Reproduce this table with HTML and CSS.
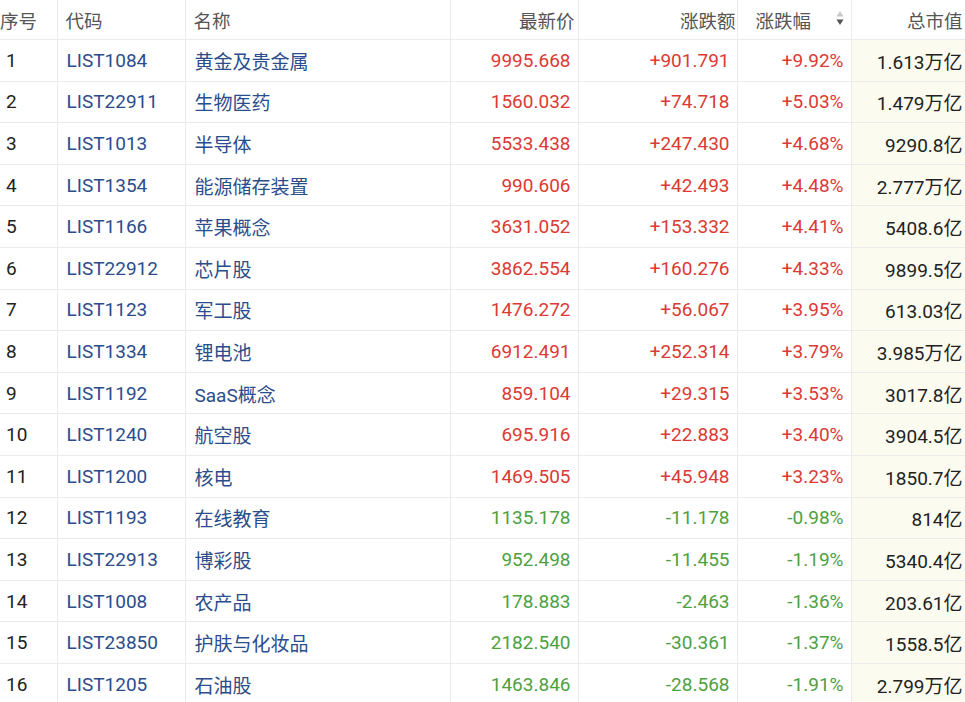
FILE: index.html
```html
<!DOCTYPE html>
<html lang="zh">
<head>
<meta charset="utf-8">
<title>板块行情</title>
<link rel="stylesheet" href="styles.css">
</head>
<body>
<table class="quotes">
  <colgroup>
    <col class="c-idx"><col class="c-code"><col class="c-name"><col class="c-price"><col class="c-chg"><col class="c-pct"><col class="c-cap">
  </colgroup>
  <thead>
    <tr>
      <th class="h-idx">序号</th>
      <th class="left">代码</th>
      <th class="left">名称</th>
      <th class="right">最新价</th>
      <th class="right h-chg">涨跌额</th>
      <th class="left sort-th"><span class="sort-label">涨跌幅</span><span class="sort-icon"><svg width="10" height="18" viewBox="0 0 10 18"><path d="M1.5 7.5 L5 2 L8.5 7.5 Z" fill="#c8c8c8"/><path d="M1.5 10.5 L5 16 L8.5 10.5 Z" fill="#555"/></svg></span></th>
      <th class="right">总市值</th>
    </tr>
  </thead>
  <tbody>
    <tr><td class="idx">1</td><td class="code">LIST1084</td><td class="name">黄金及贵金属</td><td class="num up">9995.668</td><td class="num up">+901.791</td><td class="num up">+9.92%</td><td class="cap">1.613万亿</td></tr>
    <tr><td class="idx">2</td><td class="code">LIST22911</td><td class="name">生物医药</td><td class="num up">1560.032</td><td class="num up">+74.718</td><td class="num up">+5.03%</td><td class="cap">1.479万亿</td></tr>
    <tr><td class="idx">3</td><td class="code">LIST1013</td><td class="name">半导体</td><td class="num up">5533.438</td><td class="num up">+247.430</td><td class="num up">+4.68%</td><td class="cap">9290.8亿</td></tr>
    <tr><td class="idx">4</td><td class="code">LIST1354</td><td class="name">能源储存装置</td><td class="num up">990.606</td><td class="num up">+42.493</td><td class="num up">+4.48%</td><td class="cap">2.777万亿</td></tr>
    <tr><td class="idx">5</td><td class="code">LIST1166</td><td class="name">苹果概念</td><td class="num up">3631.052</td><td class="num up">+153.332</td><td class="num up">+4.41%</td><td class="cap">5408.6亿</td></tr>
    <tr><td class="idx">6</td><td class="code">LIST22912</td><td class="name">芯片股</td><td class="num up">3862.554</td><td class="num up">+160.276</td><td class="num up">+4.33%</td><td class="cap">9899.5亿</td></tr>
    <tr><td class="idx">7</td><td class="code">LIST1123</td><td class="name">军工股</td><td class="num up">1476.272</td><td class="num up">+56.067</td><td class="num up">+3.95%</td><td class="cap">613.03亿</td></tr>
    <tr><td class="idx">8</td><td class="code">LIST1334</td><td class="name">锂电池</td><td class="num up">6912.491</td><td class="num up">+252.314</td><td class="num up">+3.79%</td><td class="cap">3.985万亿</td></tr>
    <tr><td class="idx">9</td><td class="code">LIST1192</td><td class="name">SaaS概念</td><td class="num up">859.104</td><td class="num up">+29.315</td><td class="num up">+3.53%</td><td class="cap">3017.8亿</td></tr>
    <tr><td class="idx">10</td><td class="code">LIST1240</td><td class="name">航空股</td><td class="num up">695.916</td><td class="num up">+22.883</td><td class="num up">+3.40%</td><td class="cap">3904.5亿</td></tr>
    <tr><td class="idx">11</td><td class="code">LIST1200</td><td class="name">核电</td><td class="num up">1469.505</td><td class="num up">+45.948</td><td class="num up">+3.23%</td><td class="cap">1850.7亿</td></tr>
    <tr><td class="idx">12</td><td class="code">LIST1193</td><td class="name">在线教育</td><td class="num down">1135.178</td><td class="num down">-11.178</td><td class="num down">-0.98%</td><td class="cap">814亿</td></tr>
    <tr><td class="idx">13</td><td class="code">LIST22913</td><td class="name">博彩股</td><td class="num down">952.498</td><td class="num down">-11.455</td><td class="num down">-1.19%</td><td class="cap">5340.4亿</td></tr>
    <tr><td class="idx">14</td><td class="code">LIST1008</td><td class="name">农产品</td><td class="num down">178.883</td><td class="num down">-2.463</td><td class="num down">-1.36%</td><td class="cap">203.61亿</td></tr>
    <tr><td class="idx">15</td><td class="code">LIST23850</td><td class="name">护肤与化妆品</td><td class="num down">2182.540</td><td class="num down">-30.361</td><td class="num down">-1.37%</td><td class="cap">1558.5亿</td></tr>
    <tr><td class="idx">16</td><td class="code">LIST1205</td><td class="name">石油股</td><td class="num down">1463.846</td><td class="num down">-28.568</td><td class="num down">-1.91%</td><td class="cap">2.799万亿</td></tr>
  </tbody>
</table>
</body>
</html>
```
FILE: styles.css
```css
html, body {
  margin: 0;
  padding: 0;
  background: #ffffff;
  overflow: hidden;
}
body {
  width: 965px;
  height: 702px;
  font-family: Roboto, "Noto Sans CJK SC", sans-serif;
  font-size: 19px;
  color: #222;
}
.quotes {
  border-collapse: collapse;
  table-layout: fixed;
  width: 972px;
}
.c-idx { width: 57px; }
.c-code { width: 128px; }
.c-name { width: 265px; }
.c-price { width: 128px; }
.c-chg { width: 159px; }
.c-pct { width: 114px; }
.c-cap { width: 121px; }

.quotes th, .quotes td {
  border: 1px solid #ebebeb;
  white-space: nowrap;
  overflow: hidden;
  padding: 0 8px;
}
.quotes tr > :first-child { border-left: none; }
.quotes thead tr > * { border-top: none; }
.quotes th {
  height: 39px;
  font-weight: 400;
  color: #555;
  font-size: 18.5px;
}
.quotes td {
  height: 40.6px;
}
.left { text-align: left; }
.right { text-align: right; }
.h-idx { text-align: left; padding-left: 0 !important; }
.quotes th.right { padding-right: 3px; }
.quotes th.h-chg { padding-right: 1px; }
.sort-th { padding-left: 18px !important; padding-right: 6px !important; }
.sort-label { display: inline-block; vertical-align: middle; }
.sort-icon {
  float: right;
  display: flex;
  align-items: center;
  height: 22px;
  margin-right: 0;
}
.idx { padding-left: 6px !important; color: #222; }
.code, .name { color: #2c4d8c; padding-left: 9px !important; }
.num { text-align: right; padding-right: 7px !important; }
.up { color: #dc3a34; }
.down { color: #4ea13f; }
.cap {
  background: #fbfbef;
  text-align: right;
  padding-right: 9px !important;
  color: #222;
}
.quotes th:last-child { background: #ffffff; padding-right: 9px; }
```
